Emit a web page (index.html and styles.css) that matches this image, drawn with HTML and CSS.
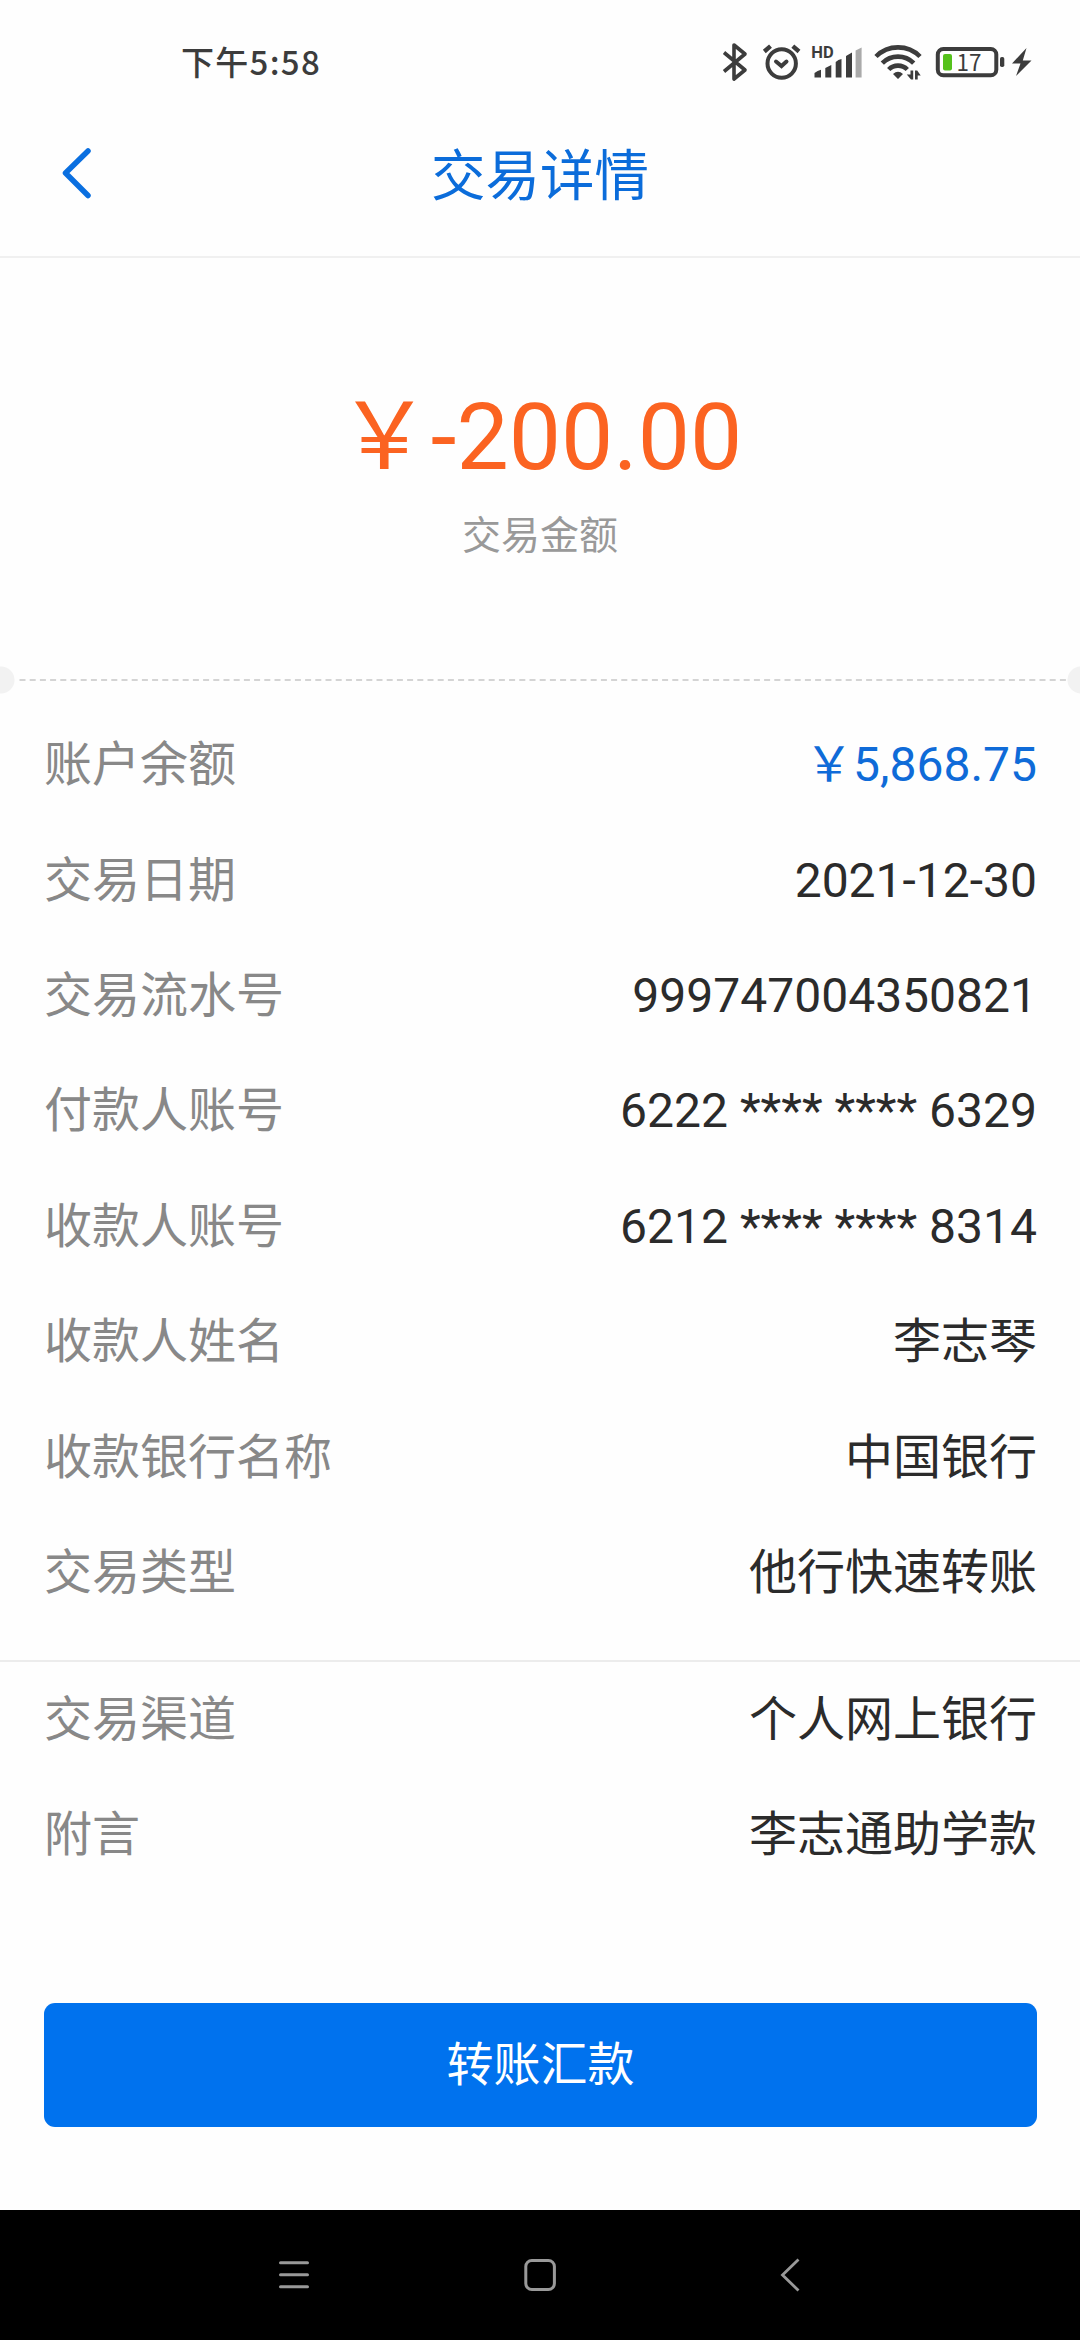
FILE: index.html
```html
<!DOCTYPE html>
<html lang="zh-CN">
<head>
<meta charset="utf-8">
<title>交易详情</title>
<link rel="stylesheet" href="styles.css">
</head>
<body>
<div class="status">
  <span class="time">下午5:58</span>
  <div class="status-icons">
    <svg width="30" height="54" viewBox="720 36 30 54" fill="none" stroke="#3c3c3c" stroke-width="3.6" stroke-linejoin="round"><path d="M724 52.5L745 70L734 79V45L745 54L724 71.500"/></svg>
    <svg width="48" height="54" viewBox="758 36 48 54" fill="none" stroke="#3c3c3c" stroke-width="4" stroke-linecap="round"><circle cx="781.700" cy="63.500" r="14.200"/><path d="M776 61.500L781.500 66L786.500 61.500"/><path d="M764.300 51.500L770.500 46.200M799 51.500L792.800 46.200" stroke-linecap="butt" stroke-width="4.400"/></svg>
    <svg width="54" height="54" viewBox="810 36 54 54" fill="#3c3c3c"><text class="hd" x="811.300" y="57.500">HD</text><path d="M814.500 77.500v-4.500q3-2.500 6.500-3.300v7.800zM825.300 77.500v-9.500l6-3v12.500zM835.700 77.500v-15.500q2.500-2.500 5.800-3v18.500zM846 77.500v-21.500l6-3.500v25z"/><path fill="#aaa" d="M855.600 77.500v-27l6-3v30z"/></svg>
    <svg width="50" height="54" viewBox="872 36 50 54" fill="none" stroke="#3c3c3c" stroke-width="4.600"><path d="M876 56.500A31 31 0 0 1 920 56.500M882.300 63.200A22 22 0 0 1 913.700 63.200M888.700 69.500A13 13 0 0 1 907.300 69.500"/><path fill="#3c3c3c" stroke="none" d="M893 74Q898 69.500 903 74L898 79zM910.500 70.500h2.700v9h-2.200l-4.200-5h3.700zM915 79.500v-9h2.200l3.500 5h-3v4z"/></svg>
    <svg width="74" height="54" viewBox="934 36 74 54"><rect x="937.800" y="49" width="58.500" height="26.300" rx="5.500" fill="none" stroke="#3c3c3c" stroke-width="4"/><rect x="1000" y="57" width="4.300" height="10" rx="1.800" fill="#3c3c3c"/><rect x="943" y="54" width="9" height="16.500" rx="2" fill="#55c11b"/><text class="level" x="956.500" y="70.500">17</text></svg>
    <svg width="24" height="54" viewBox="1010 36 24 54" fill="#3c3c3c"><path d="M1026.500 48L1012 63.500h8.500L1016 76L1031.500 60.500h-8.700z"/></svg>
  </div>
</div>
<header class="header">
  <svg width="34" height="54" viewBox="60 146 34 54" fill="none" stroke="#0a6fe0" stroke-width="5.500" stroke-linecap="round" stroke-linejoin="round"><path d="M88 151L65.500 173L88 195.500"/></svg>
  <h1 class="title">交易详情</h1>
</header>
<section class="summary">
  <div class="amount">￥-200.00</div>
  <div class="caption">交易金额</div>
</section>
<div class="tear"><svg width="1080" height="30" viewBox="0 0 1080 30"><path d="M19.500 15H1066" stroke="#d4d4d4" stroke-width="2" stroke-dasharray="6 4.200"/><circle cx="1" cy="15" r="13.500" fill="#f2f2f2"/><circle cx="1081" cy="15" r="13.500" fill="#f2f2f2"/></svg></div>
<dl class="rows">
  <div class="row"><dt>账户余额</dt><dd class="balance">￥5,868.75</dd></div>
  <div class="row"><dt>交易日期</dt><dd>2021-12-30</dd></div>
  <div class="row"><dt>交易流水号</dt><dd>999747004350821</dd></div>
  <div class="row"><dt>付款人账号</dt><dd>6222 **** **** 6329</dd></div>
  <div class="row"><dt>收款人账号</dt><dd>6212 **** **** 8314</dd></div>
  <div class="row"><dt>收款人姓名</dt><dd>李志琴</dd></div>
  <div class="row"><dt>收款银行名称</dt><dd>中国银行</dd></div>
  <div class="row"><dt>交易类型</dt><dd>他行快速转账</dd></div>
</dl>
<dl class="rows extra">
  <div class="row"><dt>交易渠道</dt><dd>个人网上银行</dd></div>
  <div class="row"><dt>附言</dt><dd>李志通助学款</dd></div>
</dl>
<div class="action"><button class="transfer">转账汇款</button></div>
<nav class="navbar">
  <svg width="36" height="36" viewBox="276 2257 36 36" stroke="#999" stroke-width="3" stroke-linecap="round"><path d="M280.500 2262.700h27M280.500 2274.700h27M280.500 2286.700h27"/></svg>
  <svg width="36" height="36" viewBox="522 2257 36 36" fill="none" stroke="#999" stroke-width="3"><rect x="525.800" y="2260.500" width="28.600" height="29" rx="6"/></svg>
  <svg width="36" height="36" viewBox="768 2257 36 36" fill="none" stroke="#999" stroke-width="2.800"><path d="M798.500 2259.500L782.500 2275L798.500 2290.500"/></svg>
</nav>
</body>
</html>
```
FILE: styles.css
```css
* { box-sizing: border-box; margin: 0; padding: 0; }
body {
  width: 1080px;
  height: 2340px;
  display: flex;
  flex-direction: column;
  background: #fefefe;
  font-family: Roboto, "Noto Sans CJK SC", sans-serif;
  color: #2b2b2b;
  overflow: hidden;
}
svg { display: block; flex: none; }
.status {
  height: 90px;
  padding: 36px 46px 0 181px;
  display: flex;
  justify-content: space-between;
}
.time {
  font: 500 33px/51px "Noto Sans CJK SC", sans-serif;
  letter-spacing: 1.300px;
  color: #3c3c3c;
}
.status-icons { display: flex; }
.status-icons svg:nth-child(2) { margin-left: 8px; }
.status-icons svg:nth-child(3) { margin-left: 4px; }
.status-icons svg:nth-child(4) { margin-left: 8px; }
.status-icons svg:nth-child(5) { margin-left: 12px; }
.status-icons svg:nth-child(6) { margin-left: 2px; }
.hd { font: 700 16.500px Roboto, sans-serif; }
.level { font: 400 22.500px "Noto Sans CJK SC", sans-serif; fill: #3c3c3c; }
.header {
  height: 168px;
  border-bottom: 2px solid #f0f0f0;
  padding: 0 60px;
  display: grid;
  grid-template-columns: 34px 1fr 34px;
  align-items: center;
}
.title {
  padding-top: 6px;
  font-weight: 400;
  font-size: 54.500px;
  line-height: 80px;
  text-align: center;
  color: #0b6cda;
}
.summary {
  height: 407px;
  padding-top: 120px;
  text-align: center;
}
.amount { font-size: 93px; line-height: 120px; color: #fb6321; }
.caption { font-size: 39px; line-height: 60px; margin-top: 8px; color: #999; }
.tear { height: 42.500px; }
.rows {
  padding: 0 43px 29.300px 44px;
  border-bottom: 2px solid #ececec;
}
.row {
  height: 115.400px;
  display: flex;
  align-items: center;
  justify-content: space-between;
  font-size: 48px;
  line-height: 70px;
}
.row dt { color: #888; }
.row .balance { color: #0f6bd8; }
.extra { border: 0; padding-bottom: 0; }
.action { flex: 1; padding: 110px 43px 0 44px; }
.transfer {
  width: 100%;
  height: 124px;
  border: 0;
  border-radius: 11px;
  background: #0072ee;
  color: #fff;
  font: 400 47px/70px Roboto, "Noto Sans CJK SC", sans-serif;
}
.navbar {
  height: 130px;
  padding: 0 276px;
  background: #000;
  display: flex;
  align-items: center;
  justify-content: space-between;
}
```
